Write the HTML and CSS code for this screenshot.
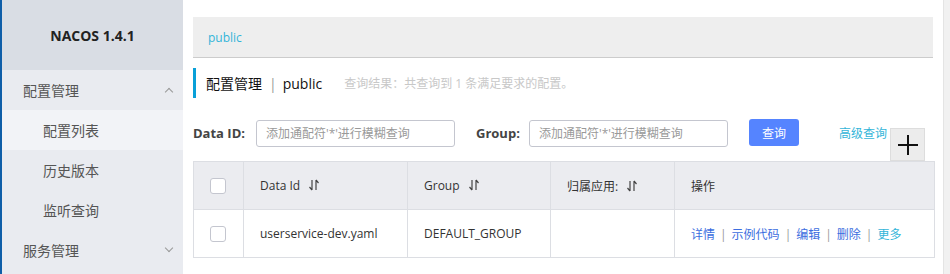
FILE: index.html
```html
<!DOCTYPE html>
<html lang="zh-CN">
<head>
    <meta charset="UTF-8">
    <title>NACOS 配置列表</title>
    <link rel="stylesheet" href="styles.css">
</head>
<body>
    <div class="layout">
        <aside class="sidebar">
            <div class="brand">NACOS 1.4.1</div>
            <ul class="menu">
                <li class="menu-group">配置管理 <span class="chev up"></span></li>
                <li class="menu-item active">配置列表</li>
                <li class="menu-item">历史版本</li>
                <li class="menu-item">监听查询</li>
                <li class="menu-group">服务管理 <span class="chev down"></span></li>
            </ul>
        </aside>

        <main class="main">
            <div class="ns-bar"><a class="ns-link">public</a></div>

            <div class="page-title">
                <span class="title-text">配置管理</span>
                <span class="title-sep">|</span>
                <span class="title-text">public</span>
                <span class="title-hint">查询结果：共查询到 1 条满足要求的配置。</span>
            </div>

            <div class="filters">
                <label class="filter-label">Data ID:</label>
                <input class="filter-input" placeholder="添加通配符'*'进行模糊查询">
                <label class="filter-label group-label">Group:</label>
                <input class="filter-input" placeholder="添加通配符'*'进行模糊查询">
                <button class="btn-query">查询</button>
                <a class="adv-link">高级查询</a>
                <div class="add-box">
                    <svg width="22" height="22" viewBox="0 0 22 22">
                        <path d="M11 1v20M1 11h20" stroke="#111" stroke-width="2"/>
                    </svg>
                </div>
            </div>

            <table class="config-table">
                <thead>
                    <tr>
                        <th class="col-check"><span class="checkbox"></span></th>
                        <th class="col-id">Data Id <svg class="sort" width="10" height="12" viewBox="0 0 10 12"><path d="M3 1v10M3 11L0.5 8M7 11V1M7 1l2.5 3" stroke="#444" stroke-width="1.2" fill="none"/></svg></th>
                        <th class="col-group">Group <svg class="sort" width="10" height="12" viewBox="0 0 10 12"><path d="M3 1v10M3 11L0.5 8M7 11V1M7 1l2.5 3" stroke="#444" stroke-width="1.2" fill="none"/></svg></th>
                        <th class="col-app">归属应用: <svg class="sort" width="10" height="12" viewBox="0 0 10 12"><path d="M3 1v10M3 11L0.5 8M7 11V1M7 1l2.5 3" stroke="#444" stroke-width="1.2" fill="none"/></svg></th>
                        <th>操作</th>
                    </tr>
                </thead>
                <tbody>
                    <tr>
                        <td class="col-check"><span class="checkbox"></span></td>
                        <td>userservice-dev.yaml</td>
                        <td>DEFAULT_GROUP</td>
                        <td></td>
                        <td class="ops">
                            <a>详情</a><span class="op-sep">|</span><a>示例代码</a><span class="op-sep">|</span><a>编辑</a><span class="op-sep">|</span><a>删除</a><span class="op-sep">|</span><a class="more">更多</a>
                        </td>
                    </tr>
                </tbody>
            </table>
        </main>

        <div class="scroll-track"></div>
    </div>
</body>
</html>
```

FILE: styles.css
```css
body {
    margin: 0;
    font-family: "Open Sans", "Noto Sans CJK SC", sans-serif;
    font-size: 12px;
    color: #333;
    background: #fff;
}
.layout {
    display: flex;
    height: 274px;
    overflow: hidden;
}
.sidebar {
    width: 181px;
    flex: none;
    border-left: 2px solid #0f5ea8;
    background: #e9ebf0;
}
.brand {
    height: 70px;
    background: #d9dde4;
    display: flex;
    align-items: center;
    justify-content: center;
    font-weight: bold;
    font-size: 14px;
    color: #222;
}
.menu {
    list-style: none;
    margin: 0;
    padding: 0;
}
.menu li {
    height: 40px;
    display: flex;
    align-items: center;
    font-size: 14px;
    color: #555;
}
.menu-group {
    padding-left: 21px;
    position: relative;
}
.menu-item {
    padding-left: 41px;
}
.menu-item.active {
    background: #f2f3f7;
}
.chev {
    position: absolute;
    right: 11px;
    top: 17px;
    width: 5px;
    height: 5px;
    border-left: 1px solid #999;
    border-top: 1px solid #999;
}
.chev.up {
    transform: rotate(45deg);
    top: 19px;
}
.chev.down {
    transform: rotate(225deg);
    top: 15px;
}
.main {
    flex: 1;
    padding: 17px 10px 0 10px;
    min-width: 0;
}
.ns-bar {
    height: 40px;
    background: #eee;
    border-bottom: 1px solid #ccc;
    display: flex;
    align-items: center;
    padding-left: 15px;
}
.ns-link {
    color: #33b5d9;
    font-size: 12px;
}
.page-title {
    margin-top: 10px;
    height: 30px;
    border-left: 3px solid #09a0d8;
    display: flex;
    align-items: center;
    padding-left: 10px;
}
.title-text {
    font-size: 14px;
    color: #111;
}
.title-sep {
    font-size: 14px;
    color: #999;
    margin: 0 6px 0 7px;
}
.title-hint {
    font-size: 12px;
    color: #c8c8c8;
    margin-left: 22px;
}
.filters {
    margin-top: 20px;
    height: 36px;
    display: flex;
    align-items: flex-start;
    padding-top: 2px;
}
.filter-label {
    font-weight: bold;
    font-size: 13px;
    color: #444;
    line-height: 27px;
    width: 63px;
}
.group-label {
    margin-left: 21px;
    width: 53px;
}
.filter-input {
    width: 199px;
    height: 27px;
    box-sizing: border-box;
    border: 1px solid #c4c6cf;
    border-radius: 3px;
    padding: 0 9px;
    font-family: inherit;
    font-size: 12px;
    color: #333;
}
.filter-input::placeholder {
    color: #999;
}
.btn-query {
    margin-left: 21px;
    width: 50px;
    height: 27px;
    border: none;
    border-radius: 3px;
    background: #5584ff;
    color: #fff;
    font-family: inherit;
    font-size: 12px;
    margin-top: -1px;
}
.adv-link {
    margin-left: 40px;
    color: #33b5d9;
    font-size: 12px;
    line-height: 27px;
}
.add-box {
    margin-left: 3px;
    margin-top: 8px;
    width: 33px;
    height: 31px;
    background: #ececec;
    border: 1px solid #ddd;
    display: flex;
    align-items: center;
    justify-content: center;
}
.config-table {
    width: 742px;
    border-collapse: collapse;
    margin-top: 5px;
    font-size: 12px;
}
.config-table th,
.config-table td {
    border: 1px solid #dcdee3;
    height: 47px;
    padding: 0 16px;
    text-align: left;
    font-weight: normal;
    color: #333;
}
.config-table th {
    background: #ebecf0;
}
.col-check {
    width: 17px;
}
.col-id {
    width: 131px;
}
.col-group {
    width: 110px;
}
.col-app {
    width: 91px;
}
.checkbox {
    display: block;
    width: 14px;
    height: 14px;
    border: 1px solid #c4c6cf;
    border-radius: 3px;
    background: #fff;
}
.sort {
    margin-left: 6px;
    vertical-align: -1px;
}
.ops a {
    color: #3c6ee0;
}
.ops a.more {
    color: #33b5d9;
}
.op-sep {
    color: #999;
    margin: 0 5px;
}
.scroll-track {
    width: 6px;
    flex: none;
    background: #f1f1f1;
    border-left: 1px solid #e4e4e4;
}
```
